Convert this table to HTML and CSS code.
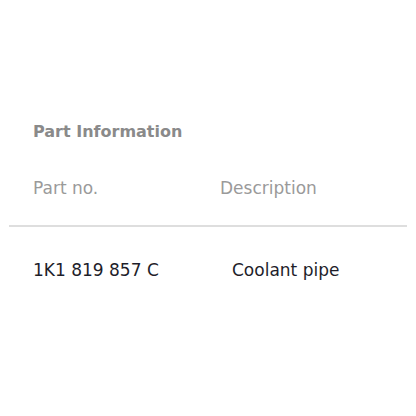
FILE: index.html
```html
<!DOCTYPE html>
<html>
<head>
<meta charset="utf-8">
<link rel="stylesheet" href="styles.css">
</head>
<body>
<div class="panel">
  <div class="title">Part Information</div>
  <div class="row head">
    <div class="c1">Part no.</div>
    <div class="c2">Description</div>
  </div>
  <div class="divider"></div>
  <div class="row vals">
    <div class="c1">1K1 819 857 C</div>
    <div class="c2">Coolant pipe</div>
  </div>
</div>
</body>
</html>
```
FILE: styles.css
```css
html, body {
  margin: 0;
  padding: 0;
  background: #ffffff;
}
body {
  width: 416px;
  height: 416px;
  font-family: "DejaVu Sans", Verdana, sans-serif;
}
.panel {
  padding: 122px 9px 0 9px;
}
.title {
  padding-left: 24px;
  font-size: 16px;
  line-height: 20px;
  font-weight: bold;
  color: #8a8a8a;
}
.row {
  display: flex;
  padding-left: 24px;
}
.head {
  margin-top: 36px;
  font-size: 17px;
  line-height: 20px;
  color: #9a9a9a;
}
.head .c1 {
  width: 187px;
}
.divider {
  margin-top: 27px;
  height: 2px;
  background: #dedede;
}
.vals {
  margin-top: 33px;
  font-size: 17px;
  line-height: 20px;
  color: #1e1e2a;
}
.vals .c1 {
  width: 199px;
}
```
